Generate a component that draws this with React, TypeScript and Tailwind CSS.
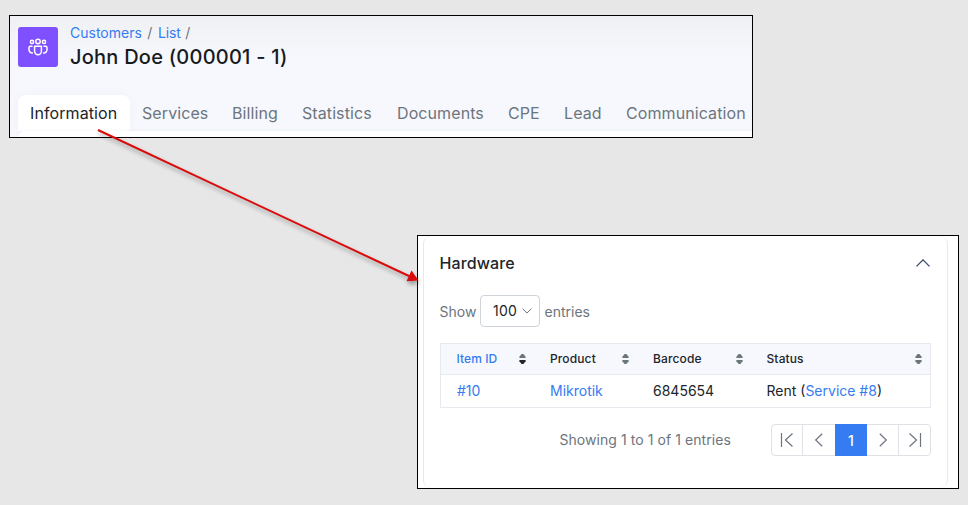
const tabs = [
  { label: 'Information', width: 'w-[112px]' },
  { label: 'Services', width: 'w-[90px]' },
  { label: 'Billing', width: 'w-[70px]' },
  { label: 'Statistics', width: 'w-[95px]' },
  { label: 'Documents', width: 'w-[111px]' },
  { label: 'CPE', width: 'w-[56px]' },
  { label: 'Lead', width: 'w-[62px]' },
  { label: 'Communication', width: 'w-[144px]' },
];

function CustomersIcon() {
  return (
    <svg width="20" height="18" viewBox="0 0 20 18" fill="none" stroke="#fff" strokeWidth="1.5" strokeLinecap="round" strokeLinejoin="round">
      <circle cx="10" cy="3.5" r="2.2" />
      <circle cx="4" cy="3.9" r="1.6" />
      <circle cx="16" cy="3.9" r="1.6" />
      <path d="M6.600 8.300h6.800v5a3.400 3.400 0 0 1-6.800 0z" />
      <path d="M4 8.300H2.400A1.400 1.400 0 0 0 1 9.700v2.100a3.200 3.200 0 0 0 3.400 3.200M16 8.300h1.600A1.400 1.400 0 0 1 19 9.700v2.100a3.200 3.200 0 0 1-3.400 3.200" />
    </svg>
  );
}

function SortIcon({ active }: { active?: boolean }) {
  return (
    <svg width="7" height="10" viewBox="0 0 7 10">
      <path d="M2.600 0h1.800L6.600 2.800v1.200H.4V2.800z" fill="#6c757d" />
      <path d="M.4 6h6.200v1.200L4.400 10H2.600L.4 7.200z" fill={active ? '#212529' : '#6c757d'} />
    </svg>
  );
}

function PageIcon({ d }: { d: string }) {
  return (
    <svg width="14" height="16" viewBox="0 0 14 16" fill="none" stroke="#6c757d" strokeWidth="1.2">
      <path d={d} />
    </svg>
  );
}

function CustomerPanel() {
  return (
    <header className="flex h-[123px] w-[744px] flex-col overflow-hidden border border-black bg-[#f6f8fd] bg-[linear-gradient(#eff0f4_0px,#f3f4f8_20px,#f6f8fd_44px)]">
      <div className="flex h-[79px] gap-3 pt-[11px] pl-2">
        <div className="flex size-10 items-center justify-center rounded-[3px] bg-[#7f50ff]">
          <CustomersIcon />
        </div>
        <div className="-mt-1 whitespace-nowrap">
          <nav className="flex h-5 items-center gap-[5.5px] text-[14px] leading-5 text-[#6c757d]">
            <a className="text-[#357bf2]">Customers</a>
            <span>/</span>
            <a className="tracking-[-0.1px] text-[#357bf2]">List</a>
            <span className="-ml-px">/</span>
          </nav>
          <h1 className="text-[20px] leading-7 font-medium tracking-[0.24px] text-[#171b20]">John Doe (000001 - 1)</h1>
        </div>
      </div>
      <nav className="flex h-9 pl-2 text-[16px] tracking-[0.09px] whitespace-nowrap text-[#6c757d]">
        {tabs.map((t, i) => (
          <a
            key={t.label}
            className={`${t.width} shrink-0 pl-3 leading-9 ${i === 0 ? 'rounded-t-lg bg-white text-[#212529] shadow-[0_0_12px_rgba(40,50,80,0.03)]' : ''}`}
          >
            {t.label}
          </a>
        ))}
      </nav>
      <div className="ml-2 flex-1 rounded-tl-lg bg-white shadow-[0_0_4px_rgba(40,50,80,0.06)]" />
    </header>
  );
}

function HardwareTable() {
  const heads = ['Item ID', 'Product', 'Barcode', 'Status'];
  return (
    <table className="w-[491px] table-fixed border-collapse border border-[#e6eaee] text-left">
      <colgroup>
        <col className="w-[93.5px]" />
        <col className="w-[103px]" />
        <col className="w-[113.5px]" />
        <col />
      </colgroup>
      <thead>
        <tr className="h-[31px] border-b border-[#e6eaee] bg-[#f6f8fd] text-[12px] text-[#212529]">
          {heads.map((h, i) => (
            <th key={h} className="p-0 pr-2 pl-4 font-medium">
              <div className="flex items-center justify-between">
                <span className={i === 0 ? '-ml-[0.5px] tracking-[0.08px] text-[#357bf2]' : 'tracking-[0.12px]'}>{h}</span>
                <SortIcon active={i === 0} />
              </div>
            </th>
          ))}
        </tr>
      </thead>
      <tbody>
        <tr className="h-[33px] text-[14px] leading-5 whitespace-nowrap text-[#212529]">
          <td className="p-0 pb-px pl-4 text-[#357bf2]">#10</td>
          <td className="p-0 pb-px pl-4 text-[#357bf2]">Mikrotik</td>
          <td className="p-0 pb-px pl-4">6845654</td>
          <td className="p-0 pb-px pl-4">
            Rent (<a className="text-[#357bf2]">Service #8</a>)
          </td>
        </tr>
      </tbody>
    </table>
  );
}

function Pagination() {
  return (
    <div className="flex h-8 w-40 rounded border border-[#dee2e6]">
      <button className="flex w-[31px] items-center justify-center border-r border-[#dee2e6]">
        <PageIcon d="M1.500 1v14M12.500 1.500 5.500 8l7 6.500" />
      </button>
      <button className="flex w-8 items-center justify-center">
        <PageIcon d="M10.200 1.700 3.700 8l6.500 6.300" />
      </button>
      <button className="-my-px w-8 bg-[#357bf2] text-[14px] font-medium text-white">1</button>
      <button className="flex w-8 items-center justify-center border-r border-[#dee2e6]">
        <PageIcon d="M3.800 1.700 10.300 8l-6.500 6.300" />
      </button>
      <button className="flex w-[31px] items-center justify-center">
        <PageIcon d="M12.500 1v14M1.500 1.500l7 6.500-7 6.500" />
      </button>
    </div>
  );
}

function HardwarePanel() {
  return (
    <section className="mt-[97px] ml-[408px] h-[254px] w-[542px] border border-black bg-white pl-[5px]">
      <div className="h-[252px] w-[525px] rounded-lg border-x border-[#e6eaee] pl-4">
        <div className="flex h-[59px] w-[491px] items-center justify-between pb-1.5">
          <h2 className="-ml-[0.5px] text-[16px] font-medium tracking-[0.1px] text-[#212529]">Hardware</h2>
          <svg className="mr-px" width="14" height="8" viewBox="0 0 14 8" fill="none" stroke="#34466b" strokeWidth="1.3">
            <path d="m.5 7.400 6.500-6.500 6.500 6.500" />
          </svg>
        </div>
        <div className="flex h-8 items-center text-[14px] text-[#6c757d]">
          <span className="-ml-[0.5px] w-[40.500px]">Show</span>
          <button className="flex h-8 w-[60px] items-center justify-between rounded border border-[#ced4da] pr-[7px] pb-px pl-3 text-[14px] text-[#212529]">
            <span className="tracking-[0.2px]">100</span>
            <svg className="mt-px" width="10" height="6" viewBox="0 0 10 6" fill="none" stroke="#6c757d">
              <path d="m.5.6 4.500 4.500L9.500.6" />
            </svg>
          </button>
          <span className="pl-[4.500px]">entries</span>
        </div>
        <div className="mt-4">
          <HardwareTable />
        </div>
        <div className="mt-4 flex w-[491px] items-center justify-end gap-10 text-[14px] text-[#6c757d]">
          <span className="pb-0.5 tracking-[0.07px]">Showing 1 to 1 of 1 entries</span>
          <Pagination />
        </div>
      </div>
    </section>
  );
}

function Arrow() {
  return (
    <svg className="pointer-events-none absolute top-[120px] left-[90px]" width="340" height="175" viewBox="90 120 340 175">
      <g className="drop-shadow-[1px_3px_2px_rgba(0,0,0,0.35)]">
        <path d="M98 130 410 276.500" stroke="#d90b0b" strokeWidth="2" />
        <path d="m418.500 280.500-12 .800 5-10.800z" fill="#d90b0b" />
      </g>
    </svg>
  );
}

export default function App() {
  return (
    <main className="relative h-[505px] w-[968px] overflow-hidden bg-[#e7e7e7] pt-[15px] pl-[9px] font-['Inter','Liberation_Sans',sans-serif]">
      <CustomerPanel />
      <HardwarePanel />
      <Arrow />
    </main>
  );
}
